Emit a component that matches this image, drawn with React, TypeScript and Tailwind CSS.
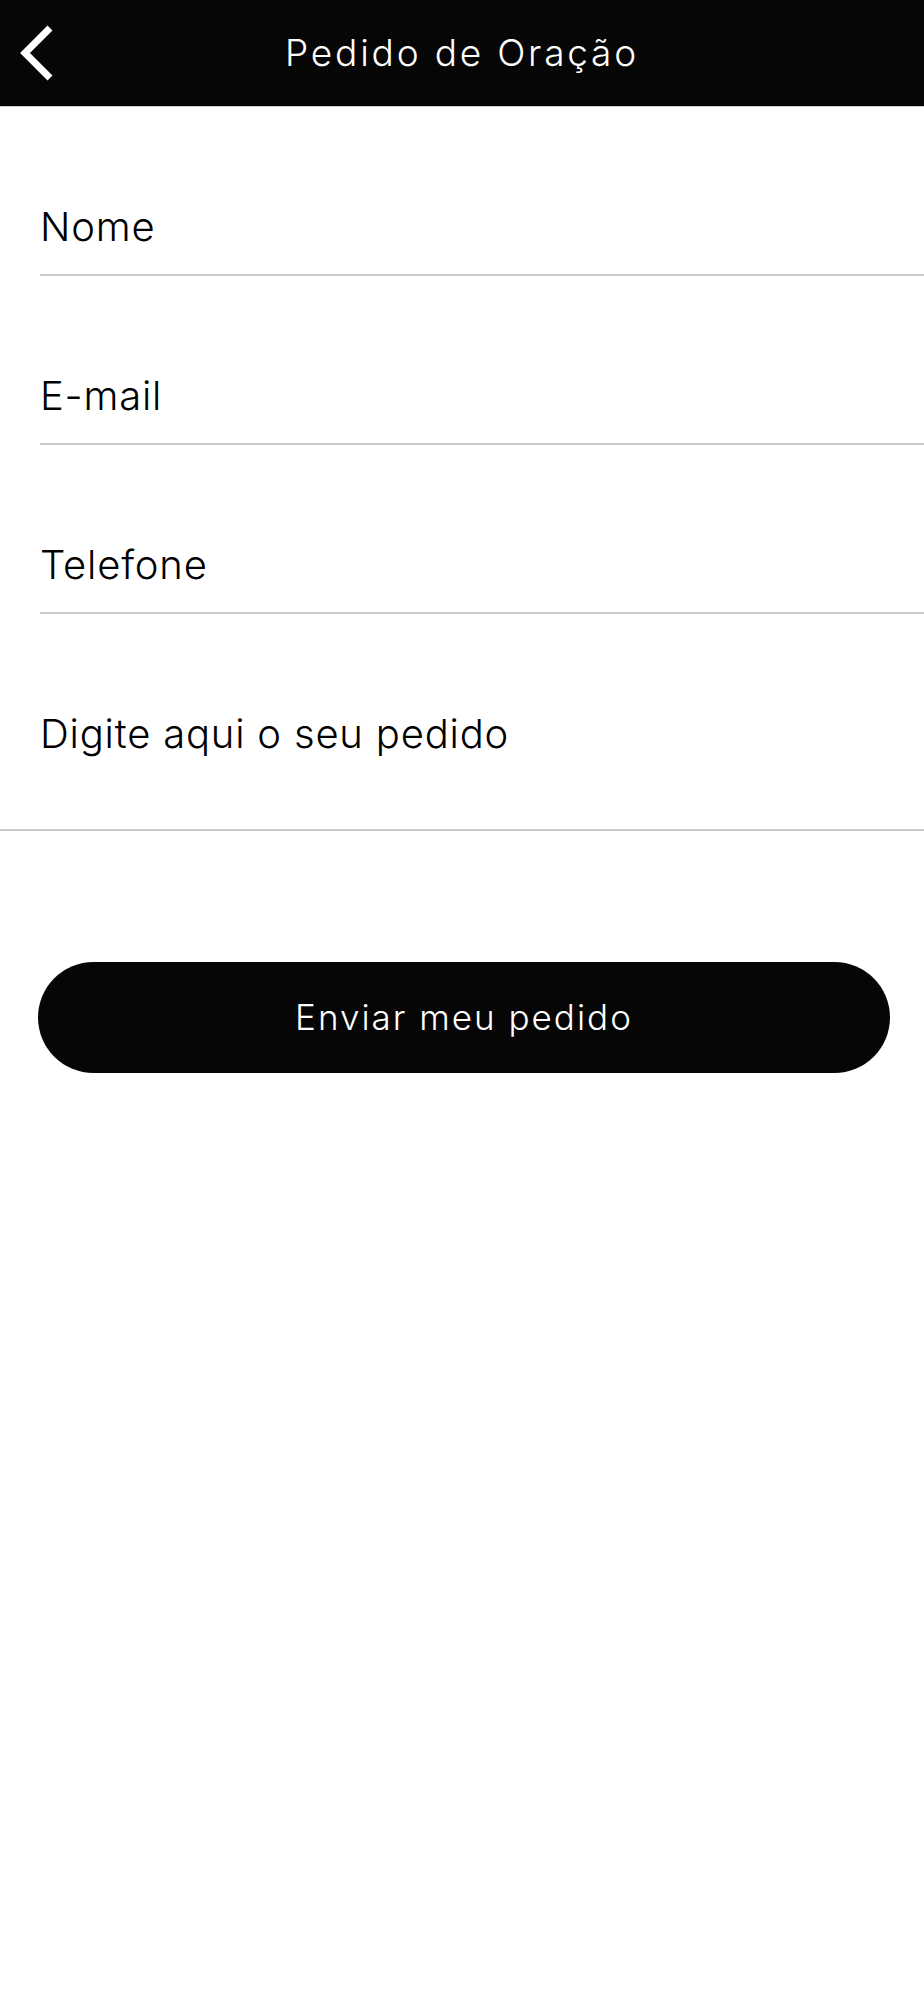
import React from 'react';

const font = { fontFamily: 'Inter, "Noto Sans", sans-serif' };

const Field = ({ label }: { label: string }) => (
  <div className="ml-[40px] border-b-2 border-[#c9c9cc] pt-[96px] pb-[23px]">
    <span className="block text-[40px] leading-[48px] font-light tracking-[0.8px] text-black">{label}</span>
  </div>
);

export default function App() {
  return (
    <div className="min-h-[2000px] bg-white" style={font}>
      {/* Top bar */}
      <header className="relative flex h-[107px] items-center justify-center bg-[#060606] border-b border-[#d0d0d0]">
        <button className="absolute left-[16px] top-[24px] flex">
          <svg width="42" height="58" viewBox="0 0 42 58" fill="none">
            <path d="M34 4 L9 29 L34 54" stroke="white" strokeWidth="7" strokeLinejoin="miter" />
          </svg>
        </button>
        <h1 className="text-[37px] font-light text-white tracking-[2.8px]">Pedido de Oração</h1>
      </header>

      {/* Form */}
      <form className="flex flex-col">
        <Field label="Nome" />
        <Field label="E-mail" />
        <Field label="Telefone" />
        <div className="border-b-2 border-[#c9c9cc] pl-[40px] pt-[96px] pb-[71px]">
          <span className="block text-[40px] leading-[48px] font-light tracking-[0.8px] text-black">
            Digite aqui o seu pedido
          </span>
        </div>

        <button
          type="button"
          className="mt-[131px] ml-[38px] mr-[34px] flex h-[111px] items-center justify-center rounded-full bg-[#060606] text-[35px] font-light tracking-[2px] text-white"
        >
          Enviar meu pedido
        </button>
      </form>
    </div>
  );
}
